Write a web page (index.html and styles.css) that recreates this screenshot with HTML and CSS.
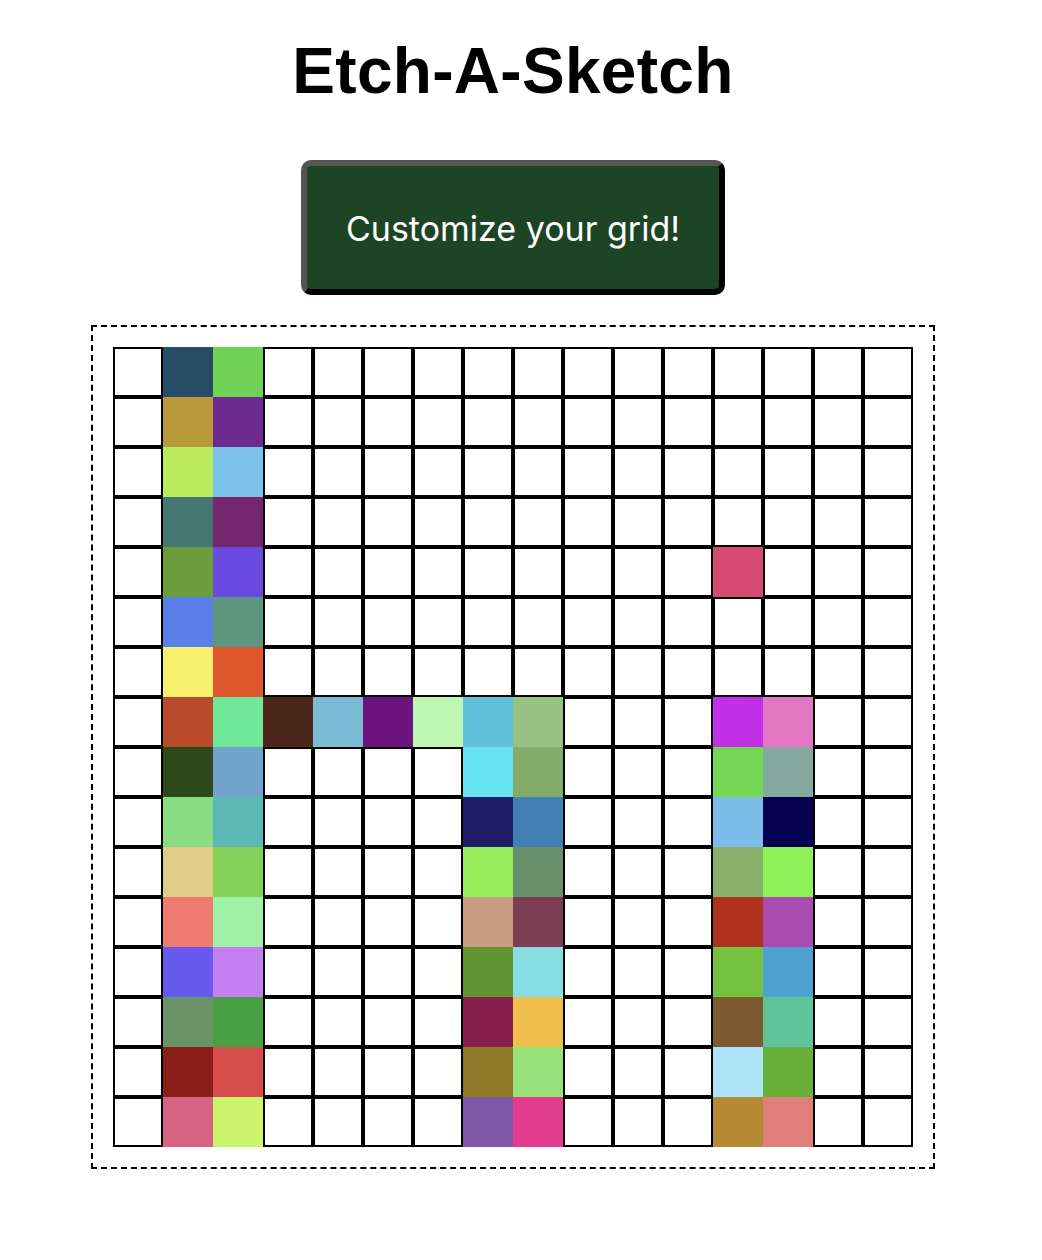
FILE: index.html
```html
<!DOCTYPE html>
<html lang="en">
<head>
<meta charset="utf-8">
<title>Etch-A-Sketch</title>
<link rel="stylesheet" href="styles.css">
</head>
<body>
<main class="page">
  <h1 class="title">Etch-A-Sketch</h1>
  <button class="customize-btn" type="button">Customize your grid!</button>
  <div class="board">
    <div class="grid" id="grid"></div>
  </div>
</main>
<script src="script.js"></script>
</body>
</html>
```

FILE: styles.css
```css
html, body {
  margin: 0;
  padding: 0;
  background: #ffffff;
}

body {
  font-family: "Liberation Sans", Arial, sans-serif;
  color: #000;
}

.page {
  width: 1026px;
  display: flex;
  flex-direction: column;
  align-items: center;
  padding-top: 35px;
  padding-bottom: 40px;
}

.title {
  margin: 0;
  font-size: 64px;
  line-height: 72px;
  font-weight: 700;
  letter-spacing: 0.3px;
}

.customize-btn {
  margin-top: 53px;
  box-sizing: border-box;
  width: 424px;
  height: 135px;
  border-width: 6px;
  border-style: solid;
  border-color: #555555 #000000 #000000 #555555;
  border-radius: 10px;
  background: #1c4425;
  color: #ffffff;
  font-family: Inter, "Noto Sans", sans-serif;
  font-size: 34px;
  font-weight: 400;
  padding: 2px 0 0;
  cursor: pointer;
}

.board {
  margin-top: 30px;
  border: 2px dashed #000;
  padding: 20px;
}

.grid {
  display: grid;
  grid-template-columns: repeat(16, 50px);
  grid-auto-rows: 50px;
}

.cell {
  box-sizing: border-box;
  width: 50px;
  height: 50px;
  border: 2px solid #000;
  background: #fff;
}

.cell.painted {
  border-color: transparent;
  background-clip: border-box;
}
```

FILE: script.js
```js
(function () {
  var painted = {
    "0,1": "#274c66", "0,2": "#70d355",
    "1,1": "#b89a3a", "1,2": "#6e2a93",
    "2,1": "#baec5e", "2,2": "#7cc3ec",
    "3,1": "#457672", "3,2": "#76266f",
    "4,1": "#6a9c3c", "4,2": "#6a4ae0", "4,12": "#d44a72",
    "5,1": "#5a7fe8", "5,2": "#5c9680",
    "6,1": "#f7f06c", "6,2": "#e0572e",
    "7,1": "#b94a2c", "7,2": "#6fe89a", "7,3": "#4d271c", "7,4": "#7abbd6",
    "7,5": "#6d137e", "7,6": "#c0f7b2", "7,7": "#60c2da", "7,8": "#98c283",
    "7,12": "#c22fe8", "7,13": "#e477c3",
    "8,1": "#2c4a1a", "8,2": "#71a4cc", "8,7": "#66e2f2", "8,8": "#83ac6a", "8,12": "#74d655", "8,13": "#84aaa0",
    "9,1": "#88dc82", "9,2": "#5cb8b4", "9,7": "#1e1f66", "9,8": "#427fb2", "9,12": "#7cbcea", "9,13": "#050050",
    "10,1": "#e0cc86", "10,2": "#86d158", "10,7": "#97ec5c", "10,8": "#68906a", "10,12": "#88ae6a", "10,13": "#8ff058",
    "11,1": "#ee7a70", "11,2": "#9ff0a8", "11,7": "#c89e82", "11,8": "#7c3c52", "11,12": "#b0321c", "11,13": "#a84cb2",
    "12,1": "#6659ee", "12,2": "#c47ff0", "12,7": "#609632", "12,8": "#88dce4", "12,12": "#74c240", "12,13": "#4ea2d0",
    "13,1": "#6a9468", "13,2": "#48a042", "13,7": "#881e4e", "13,8": "#f0be4c", "13,12": "#7e5a32", "13,13": "#60c49a",
    "14,1": "#8a1e18", "14,2": "#d84e4c", "14,7": "#8e7a28", "14,8": "#98e27c", "14,12": "#aee2f8", "14,13": "#68b038",
    "15,1": "#d86282", "15,2": "#ccf46a", "15,7": "#8158a8", "15,8": "#e23c8c", "15,12": "#b68a32", "15,13": "#e07e7a"
  };
  var grid = document.getElementById("grid");
  var frag = document.createDocumentFragment();
  for (var r = 0; r < 16; r++) {
    for (var c = 0; c < 16; c++) {
      var cell = document.createElement("div");
      cell.className = "cell";
      var color = painted[r + "," + c];
      if (color) {
        cell.className += " painted";
        cell.style.backgroundColor = color;
      }
      frag.appendChild(cell);
    }
  }
  grid.appendChild(frag);
})();
```
